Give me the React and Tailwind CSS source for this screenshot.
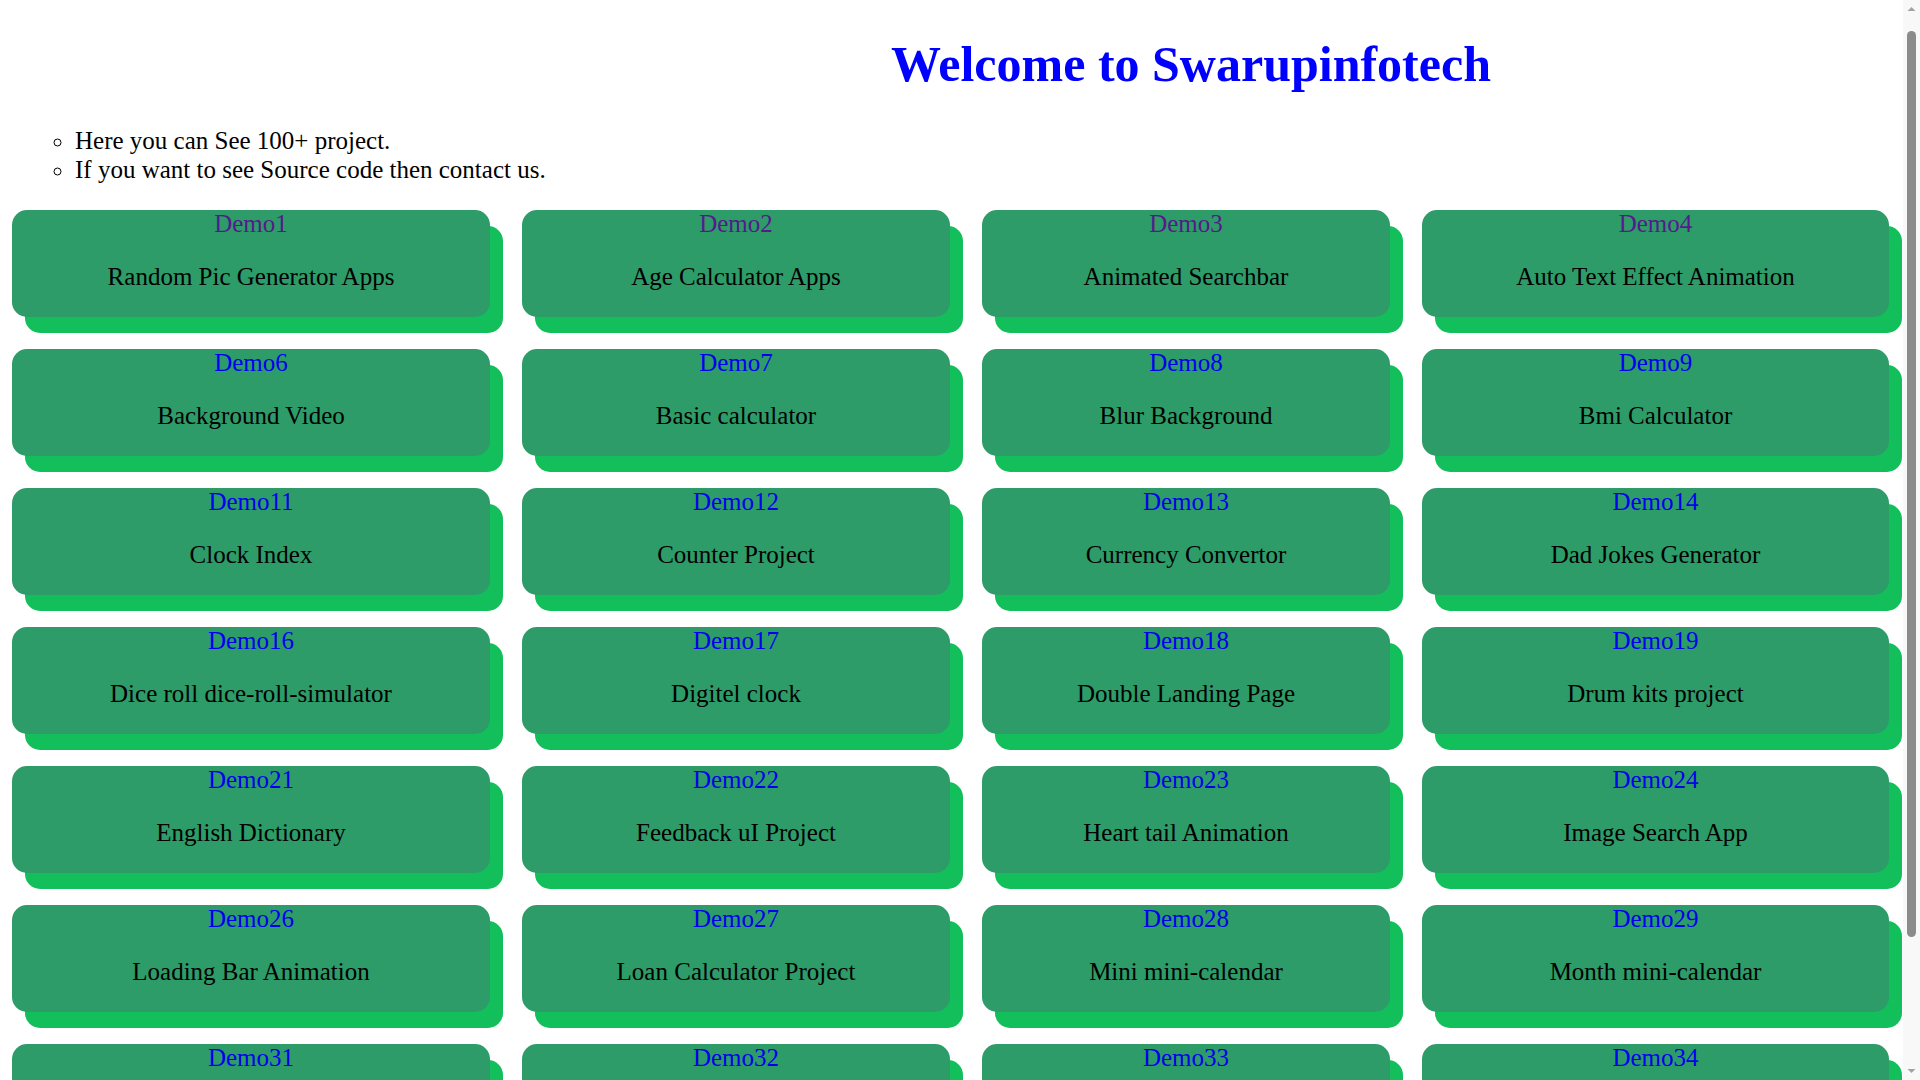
import React from "react";

const cards = [
  ["Demo1", "Random Pic Generator Apps", true],
  ["Demo2", "Age Calculator Apps", true],
  ["Demo3", "Animated Searchbar", true],
  ["Demo4", "Auto Text Effect Animation", true],
  ["Demo6", "Background Video"],
  ["Demo7", "Basic calculator"],
  ["Demo8", "Blur Background"],
  ["Demo9", "Bmi Calculator"],
  ["Demo11", "Clock Index"],
  ["Demo12", "Counter Project"],
  ["Demo13", "Currency Convertor"],
  ["Demo14", "Dad Jokes Generator"],
  ["Demo16", "Dice roll dice-roll-simulator"],
  ["Demo17", "Digitel clock"],
  ["Demo18", "Double Landing Page"],
  ["Demo19", "Drum kits project"],
  ["Demo21", "English Dictionary"],
  ["Demo22", "Feedback uI Project"],
  ["Demo23", "Heart tail Animation"],
  ["Demo24", "Image Search App"],
  ["Demo26", "Loading Bar Animation"],
  ["Demo27", "Loan Calculator Project"],
  ["Demo28", "Mini mini-calendar"],
  ["Demo29", "Month mini-calendar"],
  ["Demo31", "Music Player"],
  ["Demo32", "Navbar Project"],
  ["Demo33", "Notes App"],
  ["Demo34", "Password Generator"],
];

function Card({ label, title, visited }) {
  return (
    <div className="h-[107px] rounded-[15px] bg-[#2d9c69] shadow-[13px_16px_0_0_#12bf5b] text-center">
      <a
        href="#"
        className={
          "block text-[25px] leading-[28px] no-underline " +
          (visited ? "text-[#551a8b]" : "text-[#0000ee]")
        }
      >
        {label}
      </a>
      <p className="mt-[25px] text-[25px] leading-[28px] text-black">{title}</p>
    </div>
  );
}

function Scrollbar() {
  return (
    <div className="fixed right-0 top-0 h-screen w-[17px] bg-[#f8f8f8] flex flex-col items-center">
      <svg width="17" height="17" viewBox="0 0 17 17" className="shrink-0">
        <path d="M4.5 11 L8.5 7 L12.5 11 Z" fill="#a3a3a3" />
      </svg>
      <div className="mt-[14px] h-[906px] w-[9px] rounded-full bg-[#8b8b8b]" />
      <div className="flex-1" />
      <svg width="17" height="17" viewBox="0 0 17 17" className="shrink-0">
        <path d="M4.5 6 L8.5 10 L12.5 6 Z" fill="#a3a3a3" />
      </svg>
    </div>
  );
}

export default function App() {
  return (
    <div
      className="w-[1903px] bg-white text-black pb-[70px]"
      style={{ fontFamily: '"Liberation Serif", "Times New Roman", serif' }}
    >
      <h1 className="pt-[36px] pl-[479px] text-center text-[50px] leading-[57px] font-bold text-[#0000ff]">
        Welcome to Swarupinfotech
      </h1>
      <ul className="mt-[33px] pl-[75px] list-[circle] text-[25px] leading-[29px]">
        <li>Here you can See 100+ project.</li>
        <li>If you want to see Source code then contact us.</li>
      </ul>
      <div className="mt-[26px] ml-[12px] grid grid-cols-[478px_428px_408px_467px] gap-x-[32px] gap-y-[32px]">
        {cards.map(([label, title, visited]) => (
          <Card key={label} label={label} title={title} visited={visited} />
        ))}
      </div>
      <Scrollbar />
    </div>
  );
}
